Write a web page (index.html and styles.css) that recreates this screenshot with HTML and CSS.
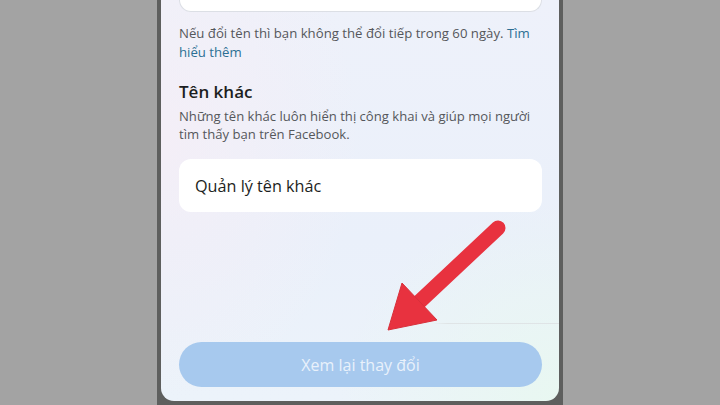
FILE: index.html
```
<!DOCTYPE html>
<html lang="vi">
<head>
<meta charset="utf-8">
<link rel="stylesheet" href="styles.css">
</head>
<body>
<div class="phone">
  <div class="screen">
    <div class="top-card"></div>
    <p class="note">Nếu đổi tên thì bạn không thể đổi tiếp trong 60 ngày. <span class="link">Tìm hiểu thêm</span></p>
    <h2 class="heading">Tên khác</h2>
    <p class="desc">Những tên khác luôn hiển thị công khai và giúp mọi người tìm thấy bạn trên Facebook.</p>
    <div class="card">Quản lý tên khác</div>
    <div class="spacer"></div>
    <div class="separator"></div>
    <div class="button">Xem lại thay đổi</div>
    <svg class="arrow" width="398" height="401" viewBox="0 0 398 401">
      <line x1="337" y1="228" x2="256" y2="304" stroke="#e8323f" stroke-width="15" stroke-linecap="round"/>
      <polygon points="241,283 227,330 276,320" fill="#e8323f" stroke="#d8303b" stroke-width="1"/>
    </svg>
  </div>
</div>
</body>
</html>
```
FILE: styles.css
```
html, body {
  margin: 0;
  padding: 0;
}
body {
  background: #a3a3a3;
  width: 720px;
  height: 405px;
  overflow: hidden;
  display: flex;
  justify-content: center;
  font-family: "Open Sans", "Noto Sans", sans-serif;
}
.phone {
  width: 398px;
  height: 401px;
  background: #5e5f5e;
  padding: 0 4px 4px 4px;
}
.screen {
  position: relative;
  box-sizing: border-box;
  width: 398px;
  height: 401px;
  border-radius: 0 0 13px 13px;
  overflow: hidden;
  padding: 0 17px 14px 18px;
  display: flex;
  flex-direction: column;
  background:
    radial-gradient(ellipse 220px 200px at 100% 100%, rgba(232, 248, 240, 0.9), rgba(232, 248, 240, 0) 100%),
    radial-gradient(ellipse 200px 260px at 0% 35%, rgba(246, 238, 246, 0.8), rgba(246, 238, 246, 0) 100%),
    linear-gradient(180deg, #eef1fa 0%, #eaf0fa 60%, #ecf3fa 100%);
}
.top-card {
  height: 11px;
  background: #fff;
  border: 1px solid #dcdfe5;
  border-top: none;
  border-radius: 0 0 12px 12px;
  flex: none;
}
.note {
  margin: 12px 0 0 0;
  font-size: 13.2px;
  line-height: 19px;
  color: #55575b;
}
.link {
  color: #2c6f94;
}
.heading {
  margin: 19px 0 0 0;
  font-size: 17px;
  line-height: 22px;
  font-weight: 600;
  color: #1c1e21;
}
.desc {
  margin: 4px 0 0 0;
  font-size: 13.1px;
  line-height: 18px;
  color: #55575b;
}
.card {
  margin-top: 16px;
  height: 53px;
  background: #fff;
  border-radius: 12px;
  display: flex;
  align-items: center;
  padding-left: 16px;
  font-size: 16.2px;
  color: #1c1e21;
  flex: none;
}
.spacer {
  flex: 1;
}
.separator {
  height: 1px;
  margin: 0 -17px 18px -18px;
  background: linear-gradient(to right, rgba(220, 226, 230, 0) 68%, #dfe4e6 72%);
  flex: none;
}
.button {
  height: 45px;
  border-radius: 23px;
  background: #a7c9ee;
  color: #e9f1fb;
  font-size: 16px;
  display: flex;
  align-items: center;
  justify-content: center;
  flex: none;
}
.arrow {
  position: absolute;
  left: 0;
  top: 0;
  pointer-events: none;
}
```
